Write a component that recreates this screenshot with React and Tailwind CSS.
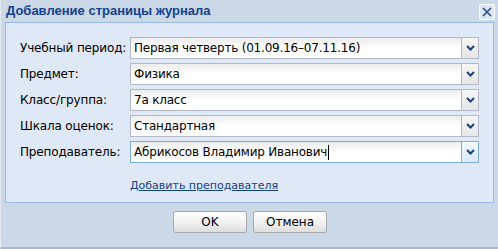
import React from "react";

const font = { fontFamily: '"DejaVu Sans", Verdana, sans-serif' };

function Chevron() {
  return (
    <svg width="9" height="6" viewBox="0 0 9 6">
      <path d="M1 1 L4.5 4.5 L8 1" fill="none" stroke="#1f3f7a" strokeWidth="2" />
    </svg>
  );
}

function Row({ label, value, active, cursor }) {
  return (
    <div className="flex items-center h-[22px]">
      <div className="w-[110px] text-[12px] text-black tracking-[-0.15px]">{label}</div>
      <div
        className={
          "flex h-[22px] w-[349px] border " +
          (active ? "border-[#7eadd9]" : "border-[#b5b8c8]")
        }
      >
        <div className="flex-1 flex items-center pl-[3px] text-[12px] text-black tracking-[-0.2px] bg-gradient-to-b from-[#ececec] via-white to-white">
          <span>{value}</span>
          {cursor && <span className="inline-block w-[1px] h-[15px] bg-black ml-[1px]" />}
        </div>
        <div
          className={
            "w-[17px] flex items-center justify-center border-l " +
            (active
              ? "border-[#7eadd9] bg-gradient-to-b from-[#f4f9ff] to-[#d9e8fb]"
              : "border-[#b5b8c8] bg-gradient-to-b from-[#f6f6f6] to-[#e6e6e6]")
          }
        >
          <Chevron />
        </div>
      </div>
    </div>
  );
}

function Button({ children }) {
  return (
    <div className="w-[74px] h-[22px] rounded-[3px] border border-[#a8a8a8] bg-gradient-to-b from-white via-[#f2f2f2] to-[#dedede] flex items-center justify-center text-[12px] text-black">
      {children}
    </div>
  );
}

export default function App() {
  return (
    <div
      style={font}
      className="w-[498px] h-[249px] bg-[#cbd8e7] border-l border-l-[#e3e9f1] border-b-2 border-b-[#a9b8ca] flex flex-col"
    >
      <div className="h-[22px] flex items-center justify-between pl-[5px] pr-[3px]">
        <span
          className="text-[13px] font-bold text-[#15428b]"
          style={{ fontFamily: '"Liberation Sans", Arial, sans-serif' }}
        >
          Добавление страницы журнала
        </span>
        <div className="w-[16px] h-[16px] mt-[2px] border border-white bg-[#dbe6f5] flex items-center justify-center rounded-[2px]">
          <svg width="10" height="10" viewBox="0 0 10 10">
            <path d="M1 1 L9 9 M9 1 L1 9" stroke="#2b4a86" strokeWidth="1.6" />
          </svg>
        </div>
      </div>
      <div className="ml-[4px] w-[489px] h-[181px] border border-[#99bbe8] bg-[#dfe8f6] pt-[14px] pl-[14px] flex flex-col gap-[4px]">
        <Row label="Учебный период:" value="Первая четверть (01.09.16–07.11.16)" />
        <Row label="Предмет:" value="Физика" />
        <Row label="Класс/группа:" value="7а класс" />
        <Row label="Шкала оценок:" value="Стандартная" />
        <Row label="Преподаватель:" value="Абрикосов Владимир Иванович" active cursor />
        <div className="pl-[110px] mt-[5px]">
          <span className="text-[11px] text-[#15428b] underline">Добавить преподавателя</span>
        </div>
      </div>
      <div className="flex justify-center gap-[6px] pt-[8px] pl-[1px]">
        <Button>OK</Button>
        <Button>Отмена</Button>
      </div>
    </div>
  );
}
